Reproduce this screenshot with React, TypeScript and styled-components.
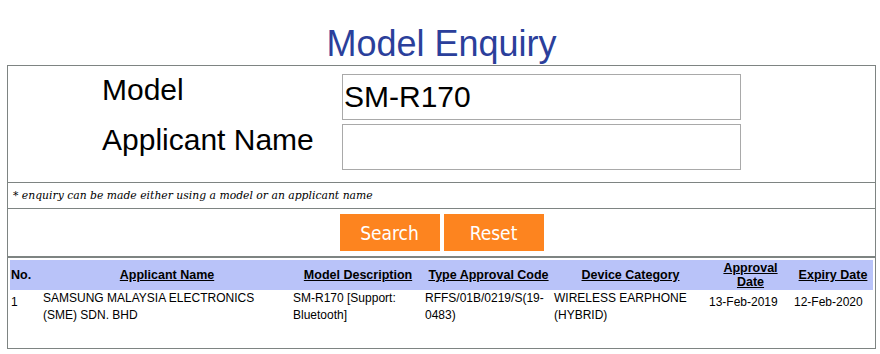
import React from 'react';
import styled, { createGlobalStyle } from 'styled-components';

const GlobalStyle = createGlobalStyle`
  html, body {
    margin: 0;
    padding: 0;
    background: #ffffff;
    font-family: "Liberation Sans", Arial, sans-serif;
    color: #000000;
  }
`;

const Page = styled.div`
  width: 869px;
  margin-left: 7px;
  padding-top: 23px;
`;

const Title = styled.h1`
  margin: 0;
  font-size: 36px;
  line-height: 42px;
  font-weight: normal;
  color: #2b3f9b;
  text-align: center;
`;

const Panel = styled.div`
  box-sizing: border-box;
  height: 284px;
  border: 1px solid #7e8482;
  display: flex;
  flex-direction: column;
`;

const FormGrid = styled.div`
  display: grid;
  grid-template-columns: 240px 399px;
  row-gap: 4px;
  padding: 8px 0 12px 94px;
  height: 116px;
  box-sizing: border-box;
`;

const Label = styled.label`
  align-self: start;
  margin-top: -1px;
  font-size: 30px;
  line-height: 34px;
`;

const TextInput = styled.input`
  box-sizing: border-box;
  width: 399px;
  height: 46px;
  border: 1px solid #a9a9a9;
  padding: 0 1px;
  margin: 0;
  font-family: "Liberation Sans", Arial, sans-serif;
  font-size: 30px;
  color: #000000;
  outline: none;
`;

const Note = styled.div`
  height: 27px;
  box-sizing: border-box;
  border-top: 1px solid #7e8482;
  border-bottom: 1px solid #7e8482;
  padding-left: 5px;
  display: flex;
  align-items: center;
  font-family: "DejaVu Serif", "Liberation Serif", serif;
  font-style: italic;
  font-size: 10.8px;
`;

const ButtonRow = styled.div`
  display: flex;
  justify-content: center;
  gap: 4px;
  padding: 5px 0;
  height: 47px;
  box-sizing: border-box;
`;

const ActionButton = styled.button`
  width: 100px;
  height: 37px;
  border: none;
  margin: 0;
  padding: 0;
  background: #fd841f;
  color: #ffffff;
  font-family: "DejaVu Sans Condensed", "DejaVu Sans", Verdana, sans-serif;
  font-stretch: condensed;
  font-size: 19px;
  cursor: pointer;
`;

const Results = styled.div`
  border-top: 2px solid #7e8482;
  padding: 2px 1px 0 2px;
  height: 92px;
  box-sizing: border-box;
`;

const Table = styled.table`
  width: 863px;
  border-collapse: collapse;
  table-layout: fixed;
`;

const HeadRow = styled.tr`
  background: #b9c3f9;
  height: 30px;
`;

const Th = styled.th<{ $w: number; $left?: boolean }>`
  box-sizing: border-box;
  width: ${({ $w }) => $w}px;
  padding: 1px;
  font-size: 12.5px;
  line-height: 14px;
  font-weight: bold;
  text-align: ${({ $left }) => ($left ? 'left' : 'center')};
  vertical-align: middle;

  a {
    color: #000000;
    text-decoration: underline;
  }
`;

const Td = styled.td<{ $single?: boolean }>`
  box-sizing: border-box;
  padding: ${({ $single }) => ($single ? '4px 1px 0' : '0 1px')};
  font-size: 12px;
  line-height: 16.5px;
  vertical-align: top;
`;

const columns = [
  { key: 'no', label: 'No.', w: 32, left: true, sortable: false },
  { key: 'applicant', label: 'Applicant Name', w: 250, sortable: true },
  { key: 'model', label: 'Model Description', w: 132, sortable: true },
  { key: 'code', label: 'Type Approval Code', w: 129, sortable: true },
  { key: 'category', label: 'Device Category', w: 155, sortable: true },
  { key: 'approval', label: 'Approval\nDate', w: 85, sortable: true },
  { key: 'expiry', label: 'Expiry Date', w: 80, sortable: true },
];

const rows = [
  {
    no: '1',
    applicant: ['SAMSUNG MALAYSIA ELECTRONICS', '(SME) SDN. BHD'],
    model: 'SM-R170 [Support: Bluetooth]',
    code: 'RFFS/01B/0219/S(19-0483)',
    category: 'WIRELESS EARPHONE (HYBRID)',
    approval: '13-Feb-2019',
    expiry: '12-Feb-2020',
  },
];

const headerText = (label: string) =>
  label.split('\n').map((part, i) => (
    <React.Fragment key={i}>
      {i > 0 && <br />}
      {part}
    </React.Fragment>
  ));

function App() {
  return (
    <Page>
      <GlobalStyle />
      <Title>Model Enquiry</Title>
      <Panel>
        <FormGrid>
          <Label htmlFor="model">Model</Label>
          <TextInput id="model" defaultValue="SM-R170" />
          <Label htmlFor="applicant">Applicant Name</Label>
          <TextInput id="applicant" defaultValue="" />
        </FormGrid>

        {/* hint */}
        <Note>* enquiry can be made either using a model or an applicant name</Note>

        <ButtonRow>
          <ActionButton>Search</ActionButton>
          <ActionButton>Reset</ActionButton>
        </ButtonRow>

        <Results>
          <Table>
            <thead>
              <HeadRow>
                {columns.map(col => (
                  <Th key={col.key} $w={col.w} $left={col.left}>
                    {col.sortable ? <a href="#">{headerText(col.label)}</a> : col.label}
                  </Th>
                ))}
              </HeadRow>
            </thead>
            <tbody>
              {rows.map(r => (
                <tr key={r.no}>
                  <Td $single>{r.no}</Td>
                  <Td>{r.applicant[0]}<br />{r.applicant[1]}</Td>
                  <Td>{r.model}</Td>
                  <Td>{r.code}</Td>
                  <Td>{r.category}</Td>
                  <Td $single>{r.approval}</Td>
                  <Td $single>{r.expiry}</Td>
                </tr>
              ))}
            </tbody>
          </Table>
        </Results>
      </Panel>
    </Page>
  );
}

export default App;
